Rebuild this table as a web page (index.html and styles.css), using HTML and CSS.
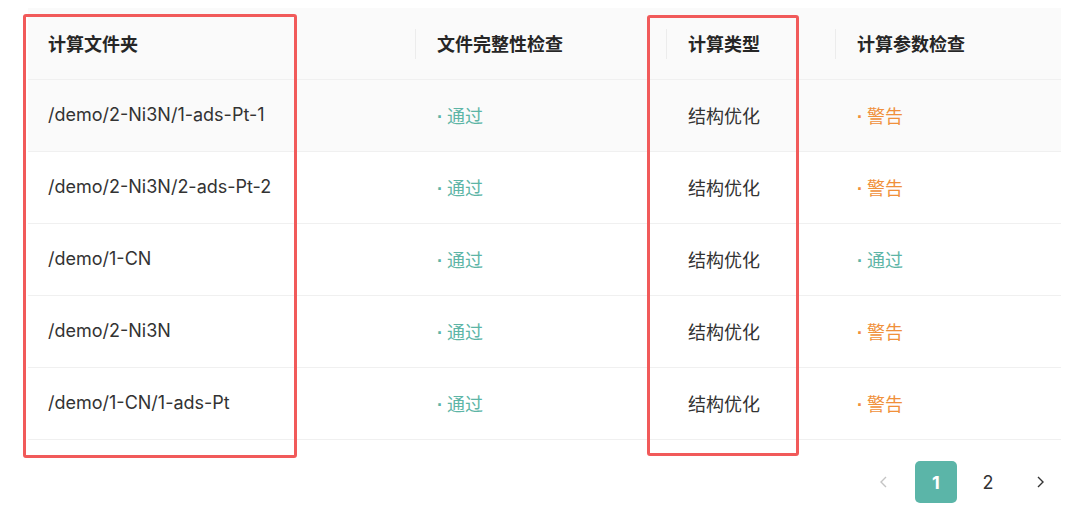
FILE: index.html
```html
<!DOCTYPE html>
<html lang="zh">
<head>
<meta charset="utf-8">
<link rel="stylesheet" href="styles.css">
</head>
<body>
<div class="page">
  <div class="table-wrap">
    <table class="tbl">
      <colgroup>
        <col class="c1"><col class="c2"><col class="c3"><col class="c4">
      </colgroup>
      <thead>
        <tr>
          <th>计算文件夹</th>
          <th class="sep">文件完整性检查</th>
          <th class="sep">计算类型</th>
          <th class="sep">计算参数检查</th>
        </tr>
      </thead>
      <tbody>
        <tr class="hover">
          <td>/demo/2-Ni3N/1-ads-Pt-1</td>
          <td><span class="st ok">通过</span></td>
          <td>结构优化</td>
          <td><span class="st warn">警告</span></td>
        </tr>
        <tr>
          <td>/demo/2-Ni3N/2-ads-Pt-2</td>
          <td><span class="st ok">通过</span></td>
          <td>结构优化</td>
          <td><span class="st warn">警告</span></td>
        </tr>
        <tr>
          <td>/demo/1-CN</td>
          <td><span class="st ok">通过</span></td>
          <td>结构优化</td>
          <td><span class="st ok">通过</span></td>
        </tr>
        <tr>
          <td>/demo/2-Ni3N</td>
          <td><span class="st ok">通过</span></td>
          <td>结构优化</td>
          <td><span class="st warn">警告</span></td>
        </tr>
        <tr>
          <td>/demo/1-CN/1-ads-Pt</td>
          <td><span class="st ok">通过</span></td>
          <td>结构优化</td>
          <td><span class="st warn">警告</span></td>
        </tr>
      </tbody>
    </table>
    <div class="mark mark-1"></div>
    <div class="mark mark-2"></div>
  </div>
  <div class="pager">
    <span class="pg arrow disabled">
      <svg width="14" height="14" viewBox="0 0 14 14"><path d="M9 2 L4 7 L9 12" fill="none" stroke="currentColor" stroke-width="1.4"/></svg>
    </span>
    <span class="pg active">1</span>
    <span class="pg">2</span>
    <span class="pg arrow">
      <svg width="14" height="14" viewBox="0 0 14 14"><path d="M5 2 L10 7 L5 12" fill="none" stroke="currentColor" stroke-width="1.4"/></svg>
    </span>
  </div>
</div>
</body>
</html>
```

FILE: styles.css
```css
html, body {
  margin: 0;
  padding: 0;
  background: #ffffff;
}
body {
  font-family: Inter, "Noto Sans CJK SC", sans-serif;
  color: #333333;
}
.page {
  padding: 8px 19px 0 28px;
}
.table-wrap {
  position: relative;
  width: 1033px;
}
.tbl {
  width: 1033px;
  border-collapse: collapse;
  table-layout: fixed;
  font-size: 18px;
}
.c1 { width: 387px; }
.c2 { width: 251px; }
.c3 { width: 169px; }
.c4 { width: 226px; }
.tbl th {
  height: 69px;
  padding: 0 20px 2px 20px;
  text-align: left;
  background: #fafafa;
  font-family: "Noto Sans CJK SC", sans-serif;
  font-weight: 700;
  color: #262626;
  border-bottom: 1px solid #f0f0f0;
  position: relative;
}
.tbl th.sep {
  padding-left: 22px;
}
.tbl th.sep::before {
  content: "";
  position: absolute;
  left: 0;
  top: 50%;
  width: 1px;
  height: 30px;
  transform: translateY(-50%);
  background: #ececec;
}
.tbl td {
  height: 69px;
  padding: 0 20px 2px 20px;
  border-bottom: 1px solid #f0f0f0;
  color: #333333;
  white-space: nowrap;
}
.tbl td + td {
  padding-left: 22px;
}
.tbl tr.hover td {
  background: #fafafa;
}
.st {
  font-family: "Noto Sans CJK SC", sans-serif;
}
.st::before {
  content: "·";
  margin-right: 4px;
  font-family: "Liberation Sans", sans-serif;
  font-weight: 700;
}
.st.ok { color: #5db5a6; }
.st.warn { color: #f0903a; }
.mark {
  position: absolute;
  border: 3px solid #f15a5a;
  border-radius: 3px;
  pointer-events: none;
}
.mark-1 {
  left: -5px;
  top: 6px;
  width: 268px;
  height: 438px;
}
.mark-2 {
  left: 619px;
  top: 7px;
  width: 146px;
  height: 435px;
}
.pager {
  display: flex;
  justify-content: flex-end;
  align-items: center;
  gap: 10px;
  margin-top: 21px;
  width: 1033px;
}
.pg {
  width: 42px;
  height: 42px;
  display: flex;
  align-items: center;
  justify-content: center;
  font-size: 18px;
  color: #333333;
  border-radius: 5px;
}
.pg.active {
  background: #5bb5a8;
  color: #ffffff;
  font-weight: 700;
}
.pg.arrow { color: #333333; }
.pg.disabled { color: #c4c4c4; }
```
